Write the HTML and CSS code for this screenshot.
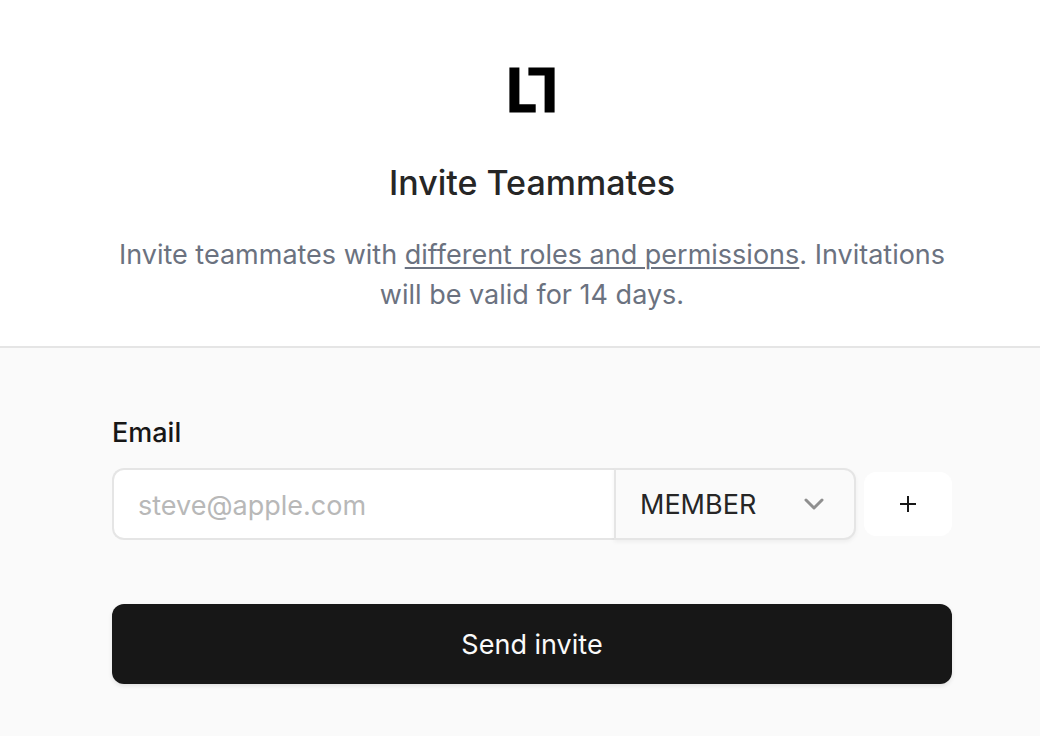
FILE: index.html
```html
<!DOCTYPE html>
<html lang="en">
<head>
<meta charset="utf-8">
<meta name="viewport" content="width=device-width, initial-scale=1">
<title>Invite Teammates</title>
<link rel="stylesheet" href="styles.css">
</head>
<body>
<main class="dialog">
  <header class="intro">
    <svg class="logo" viewBox="0 0 48 48" role="img" aria-label="Logo">
      <path d="M1.4 1.4h10v36.8h16.3v8.3H1.4zM20.4 1.4h26.2v45.1h-10V9.5H20.4z"/>
    </svg>
    <h1 class="title">Invite Teammates</h1>
    <p class="lead">Invite teammates with <a class="link" href="#roles">different roles and permissions</a>. Invitations will be valid for 14 days.</p>
  </header>
  <form class="form">
    <label class="label" for="email">Email</label>
    <div class="row">
      <div class="group">
        <input class="email" id="email" type="email" placeholder="steve@apple.com">
        <div class="role">
          <select class="select" aria-label="Role"><option>MEMBER</option></select>
          <svg class="chevron" viewBox="0 0 24 24" aria-hidden="true"><path d="M4 8l8 8 8-8"/></svg>
        </div>
      </div>
      <button class="add" type="button" aria-label="Add another email">
        <svg class="plus" viewBox="0 0 20 20" aria-hidden="true"><path d="M10 2v16M2 10h16"/></svg>
      </button>
    </div>
    <button class="submit" type="button">Send invite</button>
  </form>
</main>
</body>
</html>
```
FILE: styles.css
```css
* { box-sizing: border-box; }
body { margin: 0; font-family: Inter, "Liberation Sans", sans-serif; background: #fafafa; color: #171717; }
.dialog { min-height: 100vh; }
.intro { display: flex; flex-direction: column; align-items: center; background: #fff; border-bottom: 2px solid #e5e5e5; padding: 66px 88px 31px 112px; text-align: center; }
.logo { width: 48px; height: 48px; fill: #000; }
.title { margin: 41px 0 0; font-size: 34px; line-height: 56px; font-weight: 500; color: #262626; }
.lead { margin: 24px 0 0; font-size: 27px; line-height: 40px; color: #6b7280; }
.link { color: inherit; text-decoration-thickness: 2px; text-underline-offset: 3px; }
.form { padding: 65px 88px 52px 112px; }
.label { display: block; font-size: 27px; line-height: 40px; font-weight: 500; }
.row { display: flex; align-items: center; gap: 8px; margin-top: 15px; }
.group { display: flex; flex: 1; height: 72px; }
.email { flex: 1; min-width: 0; border: 2px solid #e5e5e5; border-right: 0; border-radius: 12px 0 0 12px; padding: 2px 24px 0; font: inherit; font-size: 27px; background: #fff; }
.email::placeholder { color: #b8b8b8; }
.role { display: grid; grid-template-columns: 1fr 52px; align-items: center; width: 242px; border: 2px solid #e5e5e5; border-radius: 0 12px 12px 0; background: #fafafa; box-shadow: 0 2px 4px rgba(0,0,0,.05); }
.select { grid-area: 1 / 1 / 2 / 3; height: 100%; appearance: none; border: 0; padding: 0 24px; background: transparent; font: inherit; font-size: 27px; color: #262626; }
.chevron { grid-area: 1 / 2; width: 24px; height: 24px; fill: none; stroke: #8f8f8f; stroke-width: 3; pointer-events: none; stroke-linecap: round; stroke-linejoin: round; }
.add { display: grid; place-items: center; width: 88px; height: 64px; padding: 0; border: 0; border-radius: 12px; background: #fff; }
.plus { width: 20px; height: 20px; stroke: #171717; stroke-width: 2; }
.submit { width: 100%; height: 80px; margin-top: 64px; border: 0; border-radius: 12px; background: #171717; color: #fafafa; font: inherit; font-size: 27px; box-shadow: 0 2px 4px rgba(0,0,0,.1); }
```
